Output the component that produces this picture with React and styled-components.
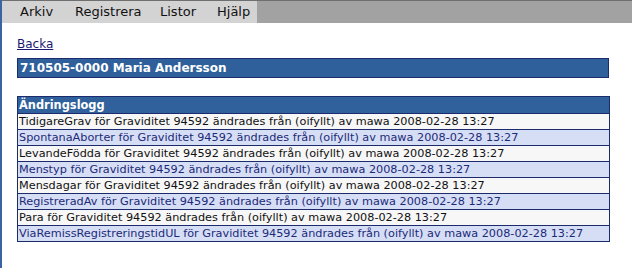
import React from "react";
import styled, { createGlobalStyle } from "styled-components";

const Global = createGlobalStyle`
  html, body { margin: 0; padding: 0; background: #ffffff; }
  body { font-family: "DejaVu Sans", Verdana, sans-serif; font-size: 13px; }
`;

const Page = styled.div`
  min-height: 268px;
  border-left: 2px solid #3a63a6;
  box-sizing: border-box;
  display: flex;
  flex-direction: column;
`;

const MenuBar = styled.div`
  height: 23px;
  background: #a2a2a2;
  border-top: 1px solid #6f6f6f;
  box-sizing: border-box;
  display: flex;
`;

const MenuGroup = styled.div`
  width: 255px;
  background: #d3d3d3;
  display: flex;
  align-items: center;
  padding-left: 18px;
  box-sizing: border-box;
`;

const MenuItem = styled.span`
  width: ${p => p.$w}px;
  color: #111;
  font-size: 13px;
  line-height: 22px;
  white-space: nowrap;
`;

const Content = styled.div`
  padding: 13px 0 0 15px;
  width: 607px;
  box-sizing: border-box;
`;

const BackLink = styled.a`
  color: #1a1a73;
  text-decoration: underline;
  font-size: 12px;
  line-height: 16px;
  display: inline-block;
  margin-bottom: 6px;
`;

const TitleBar = styled.div`
  height: 20px;
  box-sizing: border-box;
  background: #2f609b;
  border: 1px solid #1b2b6b;
  color: #fff;
  font-weight: bold;
  font-size: 12px;
  line-height: 18px;
  padding-left: 2px;
  white-space: nowrap;
  width: 592px;
`;

const Log = styled.div`
  margin-top: 18px;
  width: 593px;
  border: 1px solid #1b2b6b;
  border-bottom: none;
  box-sizing: border-box;
`;

const Row = styled.div`
  height: ${p => (p.$head ? 17 : 16)}px;
  box-sizing: border-box;
  border-bottom: 1px solid #1b2b6b;
  background: ${p => (p.$head ? "#30619c" : p.$alt ? "#d6def6" : "#f7f7f7")};
  color: ${p => (p.$head ? "#fff" : p.$alt ? "#1c2a78" : "#111")};
  font-weight: ${p => (p.$head ? "bold" : "normal")};
  font-size: ${p => (p.$head ? "11.4px" : "11.25px")};
  line-height: ${p => (p.$head ? 16 : 15)}px;
  padding-left: 1px;
  white-space: nowrap;
  overflow: hidden;
`;

const entries = [
  "TidigareGrav",
  "SpontanaAborter",
  "LevandeFödda",
  "Menstyp",
  "Mensdagar",
  "RegistreradAv",
  "Para",
  "ViaRemissRegistreringstidUL",
];

export default function App() {
  return (
    <>
      <Global />
      <Page>
        <MenuBar>
          <MenuGroup>
            <MenuItem $w={55}>Arkiv</MenuItem>
            <MenuItem $w={85}>Registrera</MenuItem>
            <MenuItem $w={57}>Listor</MenuItem>
            <MenuItem $w={40}>Hjälp</MenuItem>
          </MenuGroup>
        </MenuBar>
        <Content>
          <BackLink href="#">Backa</BackLink>
          <TitleBar>710505-0000 Maria Andersson</TitleBar>
          <Log>
            <Row $head>Ändringslogg</Row>
            {entries.map((e, i) => (
              <Row key={e} $alt={i % 2 === 1}>
                {e} för Graviditet 94592 ändrades från (oifyllt) av mawa 2008-02-28 13:27
              </Row>
            ))}
          </Log>
        </Content>
      </Page>
    </>
  );
}
